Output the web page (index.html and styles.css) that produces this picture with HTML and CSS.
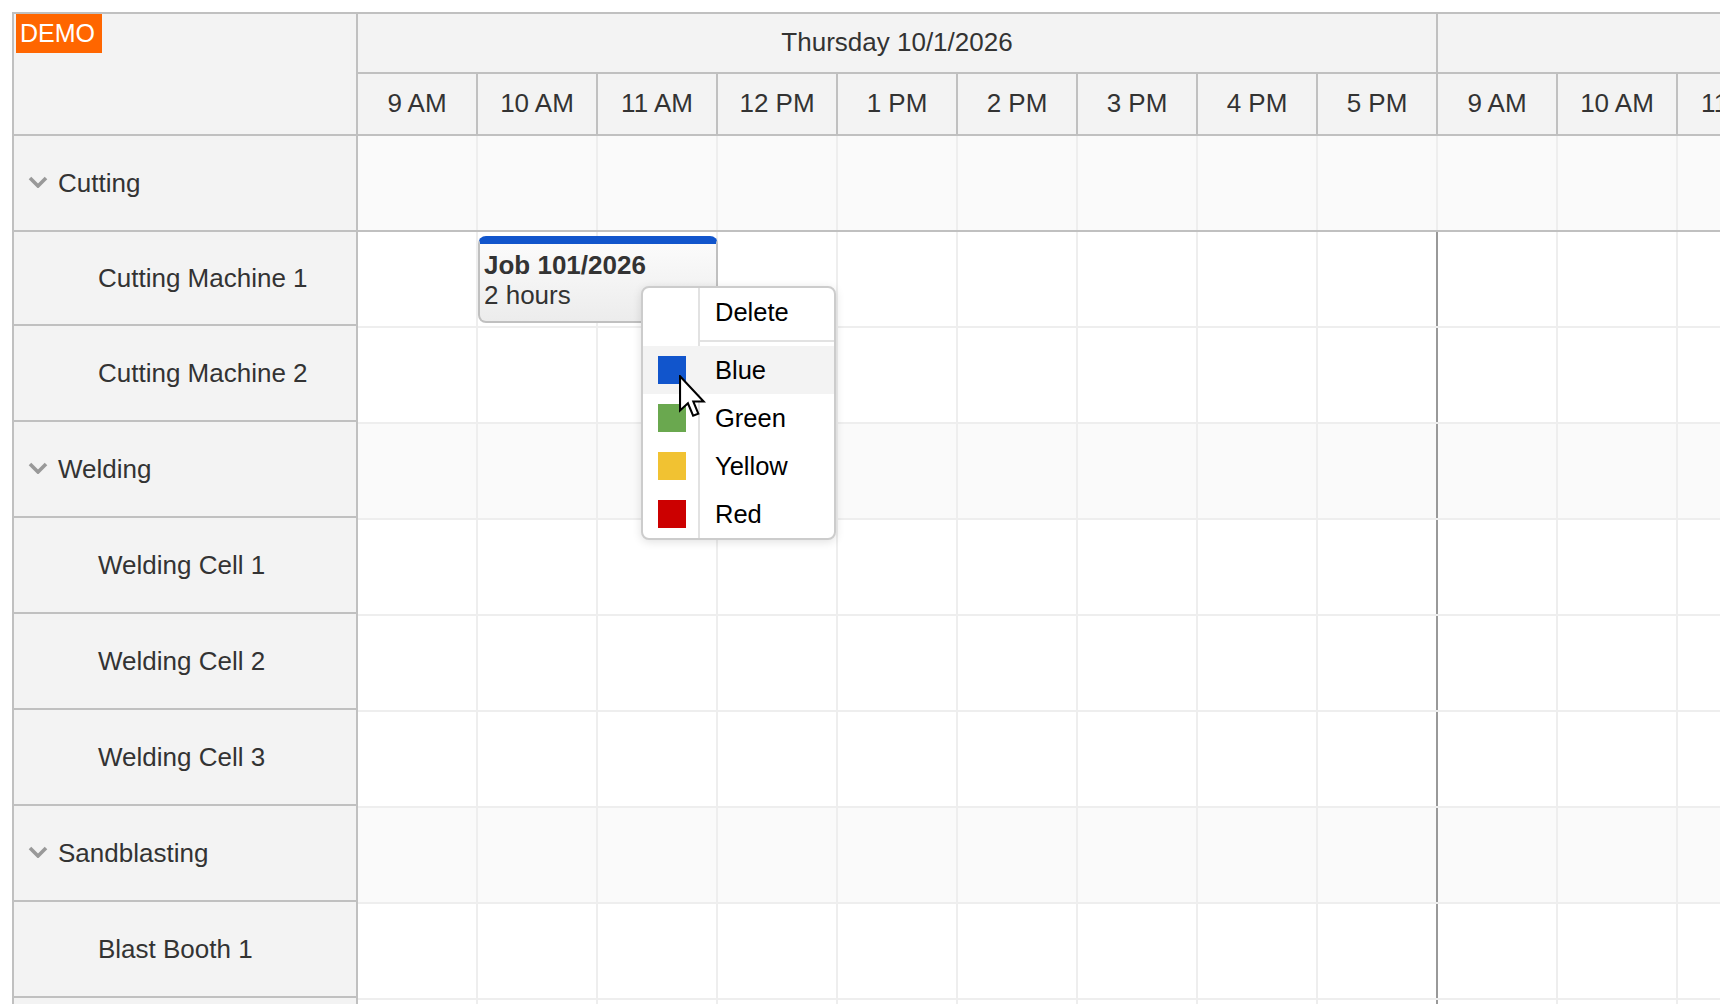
FILE: index.html
```html
<!DOCTYPE html>
<html>
<head>
<meta charset="utf-8">
<title>Scheduler</title>
<link rel="stylesheet" href="styles.css">
</head>
<body>
<div class="scheduler">
  <div class="rowheaders">
    <div class="corner"><span class="demo">DEMO</span></div>
    <div class="rh group"><svg class="chev" viewBox="0 0 20 12"><polyline points="2,2 10,10 18,2"/></svg><span>Cutting</span></div>
    <div class="rh child first">Cutting Machine 1</div>
    <div class="rh child">Cutting Machine 2</div>
    <div class="rh group"><svg class="chev" viewBox="0 0 20 12"><polyline points="2,2 10,10 18,2"/></svg><span>Welding</span></div>
    <div class="rh child">Welding Cell 1</div>
    <div class="rh child">Welding Cell 2</div>
    <div class="rh child">Welding Cell 3</div>
    <div class="rh group"><svg class="chev" viewBox="0 0 20 12"><polyline points="2,2 10,10 18,2"/></svg><span>Sandblasting</span></div>
    <div class="rh child">Blast Booth 1</div>
    <div class="rh child">Blast Booth 2</div>
  </div>
  <div class="main">
    <div class="days">
      <div class="day">Thursday 10/1/2026</div>
      <div class="day">Friday 10/2/2026</div>
    </div>
    <div class="hours">
      <div class="hour">9 AM</div>
      <div class="hour">10 AM</div>
      <div class="hour">11 AM</div>
      <div class="hour">12 PM</div>
      <div class="hour">1 PM</div>
      <div class="hour">2 PM</div>
      <div class="hour">3 PM</div>
      <div class="hour">4 PM</div>
      <div class="hour">5 PM</div>
      <div class="hour">9 AM</div>
      <div class="hour">10 AM</div>
      <div class="hour">11 AM</div>
      <div class="hour">12 PM</div>
      <div class="hour">1 PM</div>
      <div class="hour">2 PM</div>
      <div class="hour">3 PM</div>
      <div class="hour">4 PM</div>
      <div class="hour">5 PM</div>
    </div>
    <div class="grid">
      <div class="row group frozen"></div>
      <div class="row"></div>
      <div class="row"></div>
      <div class="row group"></div>
      <div class="row"></div>
      <div class="row"></div>
      <div class="row"></div>
      <div class="row group"></div>
      <div class="row"></div>
      <div class="row"></div>

      <div class="event">
        <div class="ev-title">Job 101/2026</div>
        <div class="ev-sub">2 hours</div>
      </div>

      <div class="menu">
        <div class="menu-item">Delete</div>
        <div class="menu-sep"></div>
        <div class="menu-item hover"><span class="swatch blue"></span>Blue</div>
        <div class="menu-item"><span class="swatch green"></span>Green</div>
        <div class="menu-item"><span class="swatch yellow"></span>Yellow</div>
        <div class="menu-item"><span class="swatch red"></span>Red</div>
      </div>

      <svg class="cursor" viewBox="0 0 13 21"><polygon points="0.5,0.5 0.5,17 4.3,13.5 6.8,19.5 9.3,18.5 6.9,12.7 11.9,12.7"/></svg>
    </div>
  </div>
</div>
</body>
</html>
```

FILE: styles.css
```css
html, body {
  margin: 0;
  padding: 0;
  overflow: hidden;
  background: #ffffff;
}

body {
  width: 1720px;
  height: 1004px;
  font-family: "Liberation Sans", Arial, sans-serif;
  color: #333333;
}

.scheduler {
  display: flex;
  width: max-content;
  margin: 12px 0 0 12px;
  border-top: 2px solid #c0c0c0;
  border-left: 2px solid #c0c0c0;
}

/* Row headers */
.rowheaders {
  flex: none;
  width: 342px;
  border-right: 2px solid #c0c0c0;
  background: #f3f3f3;
}

.corner {
  height: 120px;
  border-bottom: 2px solid #c0c0c0;
}

.demo {
  display: inline-block;
  margin-left: 2px;
  padding: 0 7px 0 4px;
  background: #ff6600;
  color: #ffffff;
  font-size: 25px;
  line-height: 39px;
}

.rh {
  height: 94px;
  border-bottom: 2px solid #c0c0c0;
  display: flex;
  align-items: center;
  font-size: 26px;
  white-space: nowrap;
}

.rh.first {
  height: 92px;
}

.rh.group {
  padding-left: 14px;
}

.rh.child {
  padding-left: 84px;
}

.chev {
  width: 20px;
  height: 12px;
  margin-right: 10px;
  margin-bottom: 3px;
  fill: none;
  stroke: #999999;
  stroke-width: 3.6;
}

/* Main area */
.main {
  flex: none;
}

.days {
  display: flex;
  background: #f3f3f3;
  border-bottom: 2px solid #c0c0c0;
}

.day {
  width: 1078px;
  height: 56px;
  padding-bottom: 2px;
  border-right: 2px solid #c0c0c0;
  display: flex;
  align-items: center;
  justify-content: center;
  font-size: 26px;
  white-space: nowrap;
}

.hours {
  display: flex;
  background: #f3f3f3;
  border-bottom: 2px solid #c0c0c0;
}

.hour {
  width: 118px;
  height: 58px;
  padding-bottom: 2px;
  border-right: 2px solid #c0c0c0;
  display: flex;
  align-items: center;
  justify-content: center;
  font-size: 26px;
  white-space: nowrap;
}

.grid {
  position: relative;
}

.row {
  height: 94px;
  border-bottom: 2px solid #eeeeee;
  background-color: #ffffff;
  background-image:
    linear-gradient(to right, transparent 1078px, #999999 1078px),
    linear-gradient(to right, transparent 118px, #eeeeee 118px);
  background-size: 1080px 100%, 120px 100%;
  background-repeat: repeat-x;
}

.row.group {
  background-color: #fafafa;
}

.row.frozen {
  border-bottom-color: #c0c0c0;
  background-image: linear-gradient(to right, transparent 118px, #eeeeee 118px);
  background-size: 120px 100%;
}

/* Event */
.event {
  position: absolute;
  left: 120px;
  top: 100px;
  width: 240px;
  height: 87px;
  box-sizing: border-box;
  padding: 6px 4px 0 4px;
  border: 2px solid #c0c0c0;
  border-top: 8px solid #1155cc;
  border-radius: 8px;
  background: linear-gradient(to bottom, #fbfbfb, #ececec);
  font-size: 26px;
  line-height: 30px;
  white-space: nowrap;
  overflow: hidden;
}

.ev-title {
  font-weight: bold;
}

/* Context menu */
.menu {
  position: absolute;
  left: 283px;
  top: 150px;
  width: 191px;
  border: 2px solid #cccccc;
  border-radius: 8px;
  background: #ffffff;
  box-shadow: 0 2px 10px rgba(0, 0, 0, 0.12);
  font-size: 25.5px;
  color: #000000;
  overflow: hidden;
}

.menu::before {
  content: "";
  position: absolute;
  left: 55px;
  top: 0;
  bottom: 0;
  width: 2px;
  background: #e2e2e2;
}

.menu-item {
  position: relative;
  height: 48px;
  line-height: 48px;
  padding-left: 72px;
  white-space: nowrap;
}

.menu-item.hover {
  background: #f3f3f3;
}

.menu-sep {
  position: relative;
  height: 2px;
  margin: 4px 0 4px 57px;
  background: #e2e2e2;
}

.swatch {
  position: absolute;
  left: 15px;
  top: 10px;
  width: 28px;
  height: 28px;
}

.swatch.blue { background: #1155cc; }
.swatch.green { background: #6aa84f; }
.swatch.yellow { background: #f1c232; }
.swatch.red { background: #cc0000; }

.cursor {
  position: absolute;
  left: 321px;
  top: 239px;
  width: 27px;
  height: 44px;
  fill: #ffffff;
  stroke: #000000;
  stroke-width: 1;
  stroke-linejoin: miter;
}
```
